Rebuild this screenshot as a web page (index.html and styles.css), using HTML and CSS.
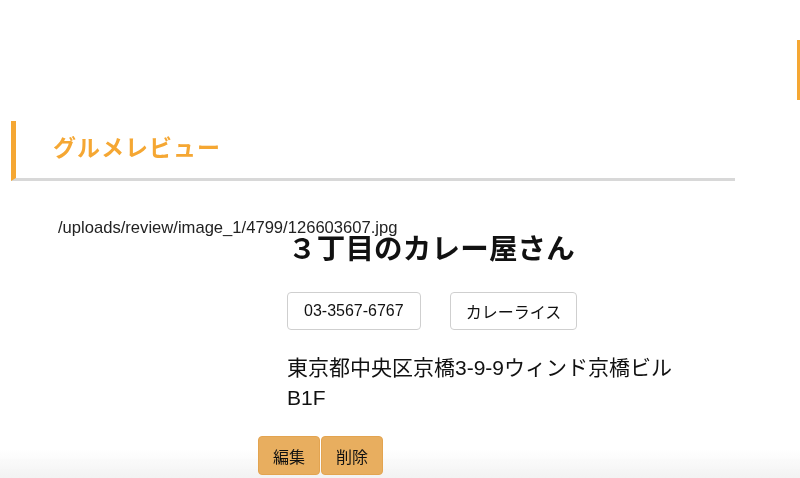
FILE: index.html
```html
<!DOCTYPE html>
<html lang="ja">
<head>
<meta charset="utf-8">
<title>グルメレビュー</title>
<link rel="stylesheet" href="styles.css">
</head>
<body>
<div class="side-accent"></div>
<main class="page">
  <h2 class="section-title">グルメレビュー</h2>
  <section class="review">
    <div class="review-image"><span class="alt">/uploads/review/image_1/4799/126603607.jpg</span></div>
    <div class="review-body">
      <h1 class="shop-name">３丁目のカレー屋さん</h1>
      <div class="tags">
        <span class="tag">03-3567-6767</span>
        <span class="tag tag-genre">カレーライス</span>
      </div>
      <p class="address">東京都中央区京橋3-9-9ウィンド京橋ビルB1F</p>
    </div>
  </section>
  <div class="actions">
    <button class="btn">編集</button>
    <button class="btn">削除</button>
  </div>
</main>
<div class="bottom-fade"></div>
</body>
</html>
```
FILE: styles.css
```css
html, body {
  margin: 0;
  padding: 0;
  background: #fff;
  font-family: "Liberation Sans", "Noto Sans CJK JP", sans-serif;
  color: #111;
}
.side-accent {
  position: absolute;
  left: 797px;
  top: 40px;
  width: 3px;
  height: 60px;
  background: #f5a733;
}
.page {
  padding-top: 121px;
  position: relative;
  z-index: 1;
}
.section-title {
  margin: 0 0 0 11px;
  border-left: 5px solid #f5a733;
  border-bottom: 3px solid #d8d8d8;
  padding: 0 0 7px 37px;
  box-sizing: border-box;
  width: 724px;
  height: 60px;
  display: flex;
  align-items: center;
  color: #f5a733;
  font-family: "Noto Sans CJK JP", sans-serif;
  font-weight: 700;
  font-size: 23px;
  letter-spacing: 1px;
  line-height: 1;
}
.review {
  display: flex;
  padding-left: 58px;
  margin-top: 38px;
}
.review-image {
  width: 229px;
  flex: none;
  font-size: 16.6px;
  line-height: 18px;
  color: #222;
}
.alt {
  white-space: nowrap;
}
.review-body {
  width: 410px;
}
.shop-name {
  margin: 8px 0 0 1px;
  font-family: "Noto Sans CJK JP", sans-serif;
  font-weight: 700;
  font-size: 28.5px;
  line-height: 40px;
  letter-spacing: 0.2px;
  color: #111;
}
.tags {
  display: flex;
  gap: 29px;
  margin-top: 25px;
}
.tag {
  height: 38px;
  box-sizing: border-box;
  border: 1px solid #cfcfcf;
  border-radius: 4px;
  padding: 0 16px;
  display: flex;
  align-items: center;
  font-size: 16px;
  color: #111;
}
.tag-genre {
  padding: 0 15px;
}
.address {
  margin: 23px 0 0 0;
  font-size: 21px;
  line-height: 30px;
  color: #111;
}
.actions {
  display: flex;
  gap: 1px;
  margin: 23px 0 0 258px;
}
.btn {
  width: 62px;
  height: 39px;
  background: #e8ae5f;
  border: 1px solid #e3a450;
  border-radius: 4px;
  font-family: "Noto Sans CJK JP", sans-serif;
  font-size: 16px;
  color: #111;
  padding: 0;
}
.bottom-fade {
  position: fixed;
  left: 0;
  right: 0;
  bottom: 0;
  height: 28px;
  background: linear-gradient(to bottom, rgba(255,255,255,0), #f2f2f2);
  z-index: 0;
}
```
